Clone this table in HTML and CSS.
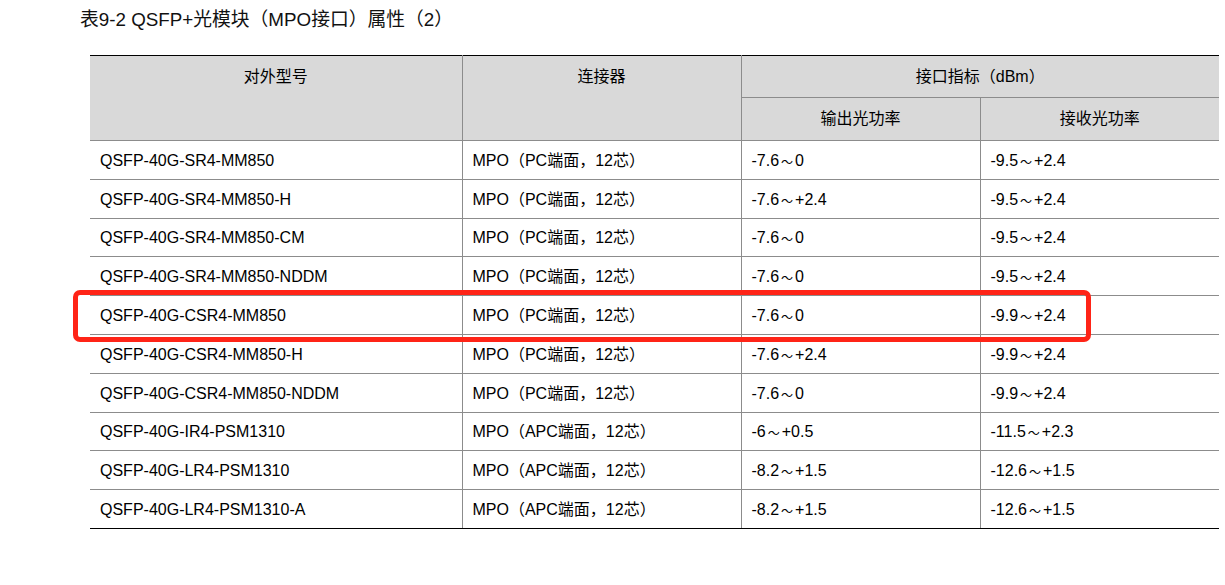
FILE: index.html
```html
<!DOCTYPE html>
<html lang="zh">
<head>
<meta charset="utf-8">
<link rel="stylesheet" href="styles.css">
</head>
<body>
<div class="page">
  <h1 class="title">表9-2 QSFP+光模块（MPO接口）属性（2）</h1>
  <div class="table-wrap">
    <table class="spec">
      <colgroup>
        <col class="c1"><col class="c2"><col class="c3"><col class="c4">
      </colgroup>
      <thead>
        <tr class="h1">
          <th rowspan="2" class="top">对外型号</th>
          <th rowspan="2" class="top">连接器</th>
          <th colspan="2">接口指标（dBm）</th>
        </tr>
        <tr class="h2">
          <th>输出光功率</th>
          <th class="last">接收光功率</th>
        </tr>
      </thead>
      <tbody>
        <tr><td>QSFP-40G-SR4-MM850</td><td>MPO（PC端面，12芯）</td><td>-7.6<span class="tl">～</span>0</td><td>-9.5<span class="tl">～</span>+2.4</td></tr>
        <tr><td>QSFP-40G-SR4-MM850-H</td><td>MPO（PC端面，12芯）</td><td>-7.6<span class="tl">～</span>+2.4</td><td>-9.5<span class="tl">～</span>+2.4</td></tr>
        <tr><td>QSFP-40G-SR4-MM850-CM</td><td>MPO（PC端面，12芯）</td><td>-7.6<span class="tl">～</span>0</td><td>-9.5<span class="tl">～</span>+2.4</td></tr>
        <tr><td>QSFP-40G-SR4-MM850-NDDM</td><td>MPO（PC端面，12芯）</td><td>-7.6<span class="tl">～</span>0</td><td>-9.5<span class="tl">～</span>+2.4</td></tr>
        <tr><td>QSFP-40G-CSR4-MM850</td><td>MPO（PC端面，12芯）</td><td>-7.6<span class="tl">～</span>0</td><td>-9.9<span class="tl">～</span>+2.4</td></tr>
        <tr><td>QSFP-40G-CSR4-MM850-H</td><td>MPO（PC端面，12芯）</td><td>-7.6<span class="tl">～</span>+2.4</td><td>-9.9<span class="tl">～</span>+2.4</td></tr>
        <tr><td>QSFP-40G-CSR4-MM850-NDDM</td><td>MPO（PC端面，12芯）</td><td>-7.6<span class="tl">～</span>0</td><td>-9.9<span class="tl">～</span>+2.4</td></tr>
        <tr><td>QSFP-40G-IR4-PSM1310</td><td>MPO（APC端面，12芯）</td><td>-6<span class="tl">～</span>+0.5</td><td>-11.5<span class="tl">～</span>+2.3</td></tr>
        <tr><td>QSFP-40G-LR4-PSM1310</td><td>MPO（APC端面，12芯）</td><td>-8.2<span class="tl">～</span>+1.5</td><td>-12.6<span class="tl">～</span>+1.5</td></tr>
        <tr><td>QSFP-40G-LR4-PSM1310-A</td><td>MPO（APC端面，12芯）</td><td>-8.2<span class="tl">～</span>+1.5</td><td>-12.6<span class="tl">～</span>+1.5</td></tr>
      </tbody>
    </table>
    <div class="highlight"></div>
  </div>
</div>
</body>
</html>
```

FILE: styles.css
```css
html, body {
  margin: 0;
  padding: 0;
  background: #ffffff;
}

.page {
  padding: 8px 0 0 80px;
  font-family: "Liberation Sans", Arial, "Noto Sans CJK SC", sans-serif;
  color: #000000;
}

.title {
  margin: 0;
  font-size: 18.8px;
  line-height: 24px;
  font-weight: normal;
  color: #111111;
}

.table-wrap {
  position: relative;
  margin: 23px 0 0 10px;
  width: 1129px;
}

.spec {
  border-collapse: collapse;
  table-layout: fixed;
  width: 1129px;
  font-size: 16px;
  border-top: 1px solid #000000;
  border-bottom: 1px solid #000000;
}

.c1 { width: 372px; }
.c2 { width: 279px; }
.c3 { width: 239px; }
.c4 { width: 239px; }

.spec th {
  background: #d9d9d9;
  font-weight: normal;
  text-align: center;
  padding: 0;
  line-height: 22px;
  border-left: 1px solid #8c8c8c;
  border-bottom: 1px solid #8c8c8c;
}

.spec th:first-child { border-left: none; }

.spec .h1 th { height: 41px; }
.spec .h2 th { height: 42px; }
.spec .h2 th:first-child { border-left: 1px solid #8c8c8c; }

.spec th.top {
  vertical-align: top;
  padding-top: 10px;
}

.spec td {
  height: 35.8px;
  padding: 2px 0 0 10px;
  line-height: 20px;
  vertical-align: middle;
  border-left: 1px solid #8c8c8c;
  border-bottom: 1px solid #8c8c8c;
  white-space: nowrap;
}

.spec td:first-child { border-left: none; }
.spec tbody tr:last-child td { border-bottom: 1px solid #000000; }

.tl {
  display: inline-block;
  width: 16px;
  text-align: center;
  font-size: 12px;
  line-height: 12px;
  vertical-align: -1px;
}

.highlight {
  position: absolute;
  left: -17px;
  top: 235px;
  width: 1008px;
  height: 42px;
  border: 5px solid #ff2417;
  border-radius: 7px;
  pointer-events: none;
}
```
